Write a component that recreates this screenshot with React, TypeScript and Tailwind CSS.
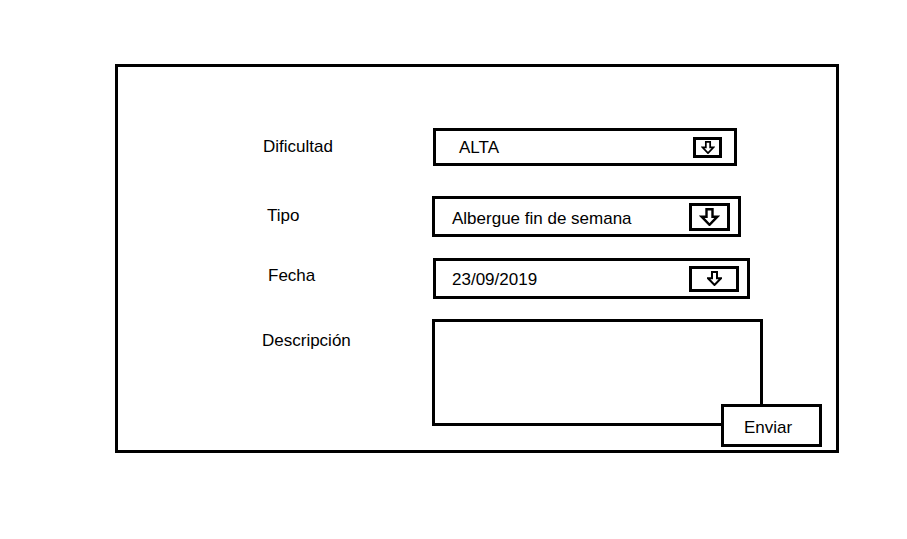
const font = { fontFamily: '"Liberation Sans", Arial, sans-serif' };

function DownArrow({ w, h }: { w: number; h: number }) {
  return (
    <svg width={w} height={h} viewBox="0 0 12 12" fill="none">
      <polygon
        points="4,0.8 8,0.8 8,5.8 11.2,5.8 6,11.2 0.8,5.8 4,5.8"
        fill="white"
        stroke="black"
        strokeWidth="1.6"
        strokeLinejoin="miter"
      />
    </svg>
  );
}

export default function App() {
  return (
    <div className="min-h-[539px] w-[907px] bg-white pl-[115px] pt-[64px] text-black" style={font}>
      <div className="relative h-[389px] w-[724px] border-[3px] border-black">
        {/* Dificultad */}
        <div className="mt-[61px] flex items-center">
          <span className="w-[315px] pl-[145px] text-[17px]">Dificultad</span>
          <div className="flex h-[38px] w-[304px] items-center justify-between border-[3px] border-black pl-[23px] pr-[12px]">
            <span className="mt-[2px] text-[17px]">ALTA</span>
            <div className="flex h-[21px] w-[29px] items-center justify-center border-[3px] border-black">
              <DownArrow w={14} h={13} />
            </div>
          </div>
        </div>

        {/* Tipo */}
        <div className="mt-[30px] flex items-center">
          <span className="-mt-[2px] w-[314px] pl-[149px] text-[17px]">Tipo</span>
          <div className="flex h-[41px] w-[309px] items-center justify-between border-[3px] border-black pl-[17px] pr-[8px]">
            <span className="mt-[5px] text-[17px]">Albergue fin de semana</span>
            <div className="flex h-[28px] w-[41px] items-center justify-center border-[3px] border-black">
              <DownArrow w={21} h={18} />
            </div>
          </div>
        </div>

        {/* Fecha */}
        <div className="mt-[21px] flex items-center">
          <span className="-mt-[5px] w-[315px] pl-[150px] text-[17px]">Fecha</span>
          <div className="flex h-[41px] w-[317px] items-center justify-between border-[3px] border-black pl-[16px] pr-[8px]">
            <span className="mt-[3px] text-[17px]">23/09/2019</span>
            <div className="flex h-[26px] w-[50px] items-center justify-center border-[3px] border-black">
              <DownArrow w={15} h={15} />
            </div>
          </div>
        </div>

        {/* Descripción */}
        <div className="mt-[20px] flex items-start">
          <span className="mt-[9px] w-[314px] pl-[144px] text-[17px]">Descripción</span>
          <div className="h-[107px] w-[331px] border-[3px] border-black" />
        </div>

        <button className="absolute left-[603px] top-[337px] flex h-[43px] w-[101px] items-center border-[3px] border-black bg-white pl-[20px] pt-[4px] text-[17px]">
          Enviar
        </button>
      </div>
    </div>
  );
}
